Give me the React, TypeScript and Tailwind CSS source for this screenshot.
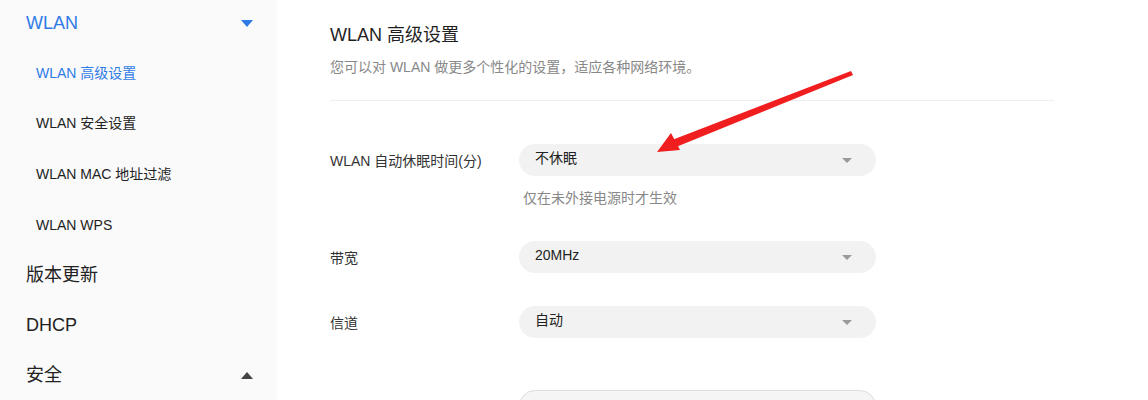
import React from 'react';

const font = { fontFamily: '"Liberation Sans", "Noto Sans CJK SC", sans-serif' };

const Caret: React.FC<{ up?: boolean; className?: string }> = ({ up, className }) => (
  <svg width="12" height="7" viewBox="0 0 12 7" className={className}>
    {up ? <path d="M0 7 L6 0 L12 7 Z" fill="currentColor" /> : <path d="M0 0 L12 0 L6 7 Z" fill="currentColor" />}
  </svg>
);

const SubItem: React.FC<{ label: string; active?: boolean }> = ({ label, active }) => (
  <div className={`h-[51px] flex items-center pl-[36px] text-[14px] ${active ? 'text-[#2f7be6]' : 'text-[#222]'}`}>
    {label}
  </div>
);

const TopItem: React.FC<{ label: string; caret?: 'up' | 'down'; active?: boolean; h?: string }> = ({ label, caret, active, h }) => (
  <div className={`${h ?? 'h-[50px]'} flex items-center justify-between pl-[26px] pr-[24px] text-[18px] ${active ? 'text-[#2f7be6]' : 'text-[#222]'}`}>
    <span>{label}</span>
    {caret && <Caret up={caret === 'up'} className={caret === 'up' ? 'text-[#444]' : 'text-[#2f7be6]'} />}
  </div>
);

const Select: React.FC<{ value: string }> = ({ value }) => (
  <div className="w-[357px] h-[32px] rounded-full bg-[#f2f2f2] flex items-center justify-between pl-[16px] pr-[24px]">
    <span className="text-[14px] text-[#222] -mt-[3px]">{value}</span>
    <svg width="10" height="5" viewBox="0 0 10 5"><path d="M0 0 L10 0 L5 5 Z" fill="#9a9a9a" /></svg>
  </div>
);

const Row: React.FC<{ label: string; children: React.ReactNode; className?: string }> = ({ label, children, className }) => (
  <div className={`flex items-start ${className ?? ''}`}>
    <div className="w-[189px] h-[32px] flex items-center text-[14px] text-[#333] pt-[2px]">{label}</div>
    <div className="flex flex-col">{children}</div>
  </div>
);

export default function App() {
  return (
    <div className="relative w-[1148px] h-[400px] overflow-hidden bg-white flex" style={font}>
      <aside className="w-[277px] h-full bg-[#fafafb] flex flex-col">
        <TopItem label="WLAN" caret="down" active h="h-[48px]" />
        <SubItem label="WLAN 高级设置" active />
        <SubItem label="WLAN 安全设置" />
        <SubItem label="WLAN MAC 地址过滤" />
        <SubItem label="WLAN WPS" />
        <TopItem label="版本更新" />
        <TopItem label="DHCP" />
        <TopItem label="安全" caret="up" />
      </aside>

      <main className="pl-[53px] pt-[23px] flex flex-col">
        <div className="w-[724px] border-b border-[#eeeeee] pb-[23px]">
          <h1 className="text-[18px] leading-[24px] text-[#1f1f1f]">WLAN 高级设置</h1>
          <p className="mt-[10px] text-[14px] leading-[20px] text-[#888]">您可以对 WLAN 做更多个性化的设置，适应各种网络环境。</p>
        </div>

        <Row label="WLAN 自动休眠时间(分)" className="mt-[43px]">
          <Select value="不休眠" />
          <div className="mt-[12px] pl-[4px] text-[14px] leading-[20px] text-[#888]">仅在未外接电源时才生效</div>
        </Row>
        <Row label="带宽" className="mt-[33px]">
          <Select value="20MHz" />
        </Row>
        <Row label="信道" className="mt-[33px]">
          <Select value="自动" />
        </Row>
        <Row label="" className="mt-[52px]">
          <div className="w-[357px] h-[32px] rounded-full bg-[#f5f5f5] border border-[#dedede]" />
        </Row>
      </main>

      <svg className="absolute left-0 top-0 pointer-events-none" width="1148" height="400">
        <polygon points="851,71 853,75 676,147 672,140" fill="#f01e1e" />
        <polygon points="657,152 671,133 680,150" fill="#f01e1e" />
      </svg>
    </div>
  );
}
